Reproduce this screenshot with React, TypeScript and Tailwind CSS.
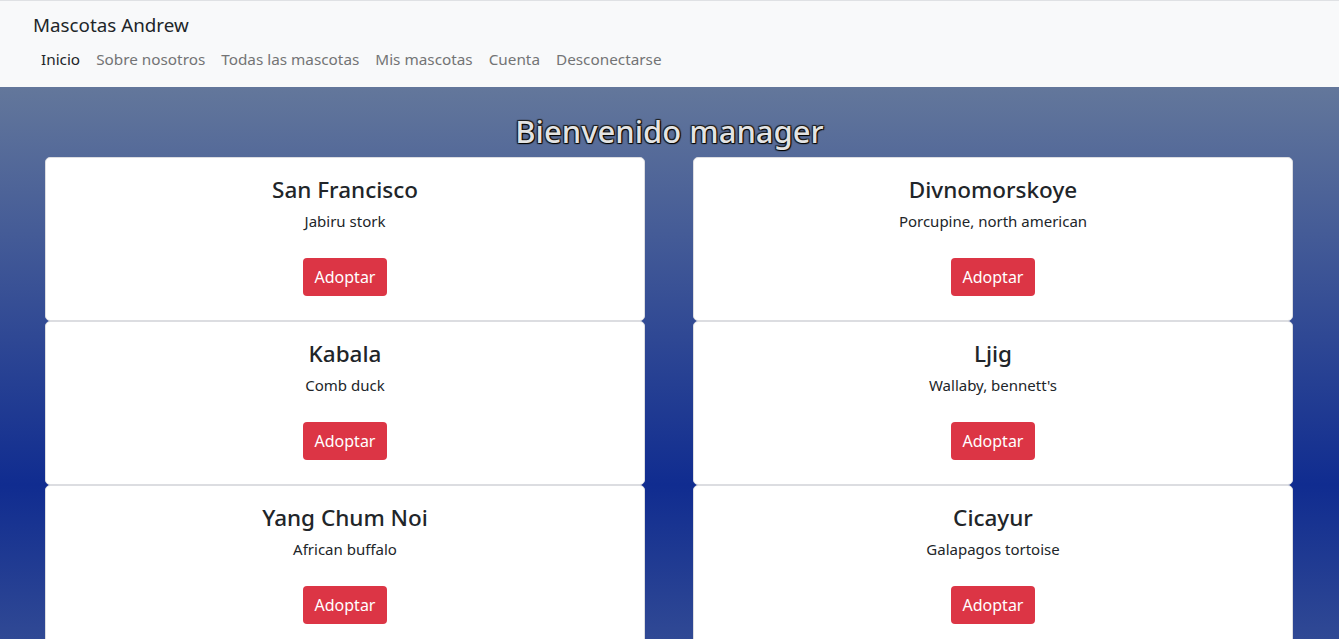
import React from 'react';

const pets = [
  { city: 'San Francisco', animal: 'Jabiru stork' },
  { city: 'Divnomorskoye', animal: 'Porcupine, north american' },
  { city: 'Kabala', animal: 'Comb duck' },
  { city: 'Ljig', animal: "Wallaby, bennett's" },
  { city: 'Yang Chum Noi', animal: 'African buffalo' },
  { city: 'Cicayur', animal: 'Galapagos tortoise' },
  { city: 'Vila', animal: 'Red-tailed hawk' },
  { city: 'Dalianwan', animal: 'Grey heron' },
];

const links = ['Inicio', 'Sobre nosotros', 'Todas las mascotas', 'Mis mascotas', 'Cuenta', 'Desconectarse'];

function PetCard({ city, animal }: { city: string; animal: string }) {
  return (
    <div className="h-[164px] bg-white border border-[#dcdde1] rounded-[5px] flex flex-col items-center text-[#212529]">
      <h4 className="mt-[17px] text-[22.5px] leading-[29px] font-medium">{city}</h4>
      <p className="mt-[5px] text-[15px] leading-[24px]">{animal}</p>
      <button className="mt-[25px] h-[38px] px-[12px] rounded-[4px] bg-[#dc3545] text-white text-[16px]">
        Adoptar
      </button>
    </div>
  );
}

export default function App() {
  return (
    <div className="min-h-screen font-['Noto_Sans','Open_Sans',sans-serif] bg-[#63779b]">
      {/* Navbar */}
      <nav className="bg-[#f8f9fa] border-t border-[#dfe1e4] pt-[9px] pb-[9px] pl-[33px]">
        <div className="h-[30px] leading-[30px] text-[18.8px] text-[#212529]">Mascotas Andrew</div>
        <ul className="flex h-[38px] items-center">
          {links.map((l, i) => (
            <li key={l}>
              <a
                href="#"
                className={
                  i === 0
                    ? 'px-2 text-[15.3px] text-[#212529]'
                    : 'px-2 text-[15.3px] text-[#737475]'
                }
              >
                {l}
              </a>
            </li>
          ))}
        </ul>
      </nav>

      {/* Content */}
      <main className="bg-[linear-gradient(180deg,#63779b_0px,#102c90_398px,#63779b_796px)] pb-10">
        <h2 className="pt-[26px] h-[70px] leading-[36px] text-center text-[31px] font-medium text-[#e3e3e3] [text-shadow:0_0_1px_#000,1px_1px_1px_#000,-1px_-1px_1px_#222,1px_-1px_1px_#222,-1px_1px_1px_#222]">
          Bienvenido manager
        </h2>
        <div className="grid grid-cols-2 gap-x-12 pl-[45px] pr-[46px]">
          {pets.map((p) => (
            <PetCard key={p.city} city={p.city} animal={p.animal} />
          ))}
        </div>
      </main>
    </div>
  );
}
